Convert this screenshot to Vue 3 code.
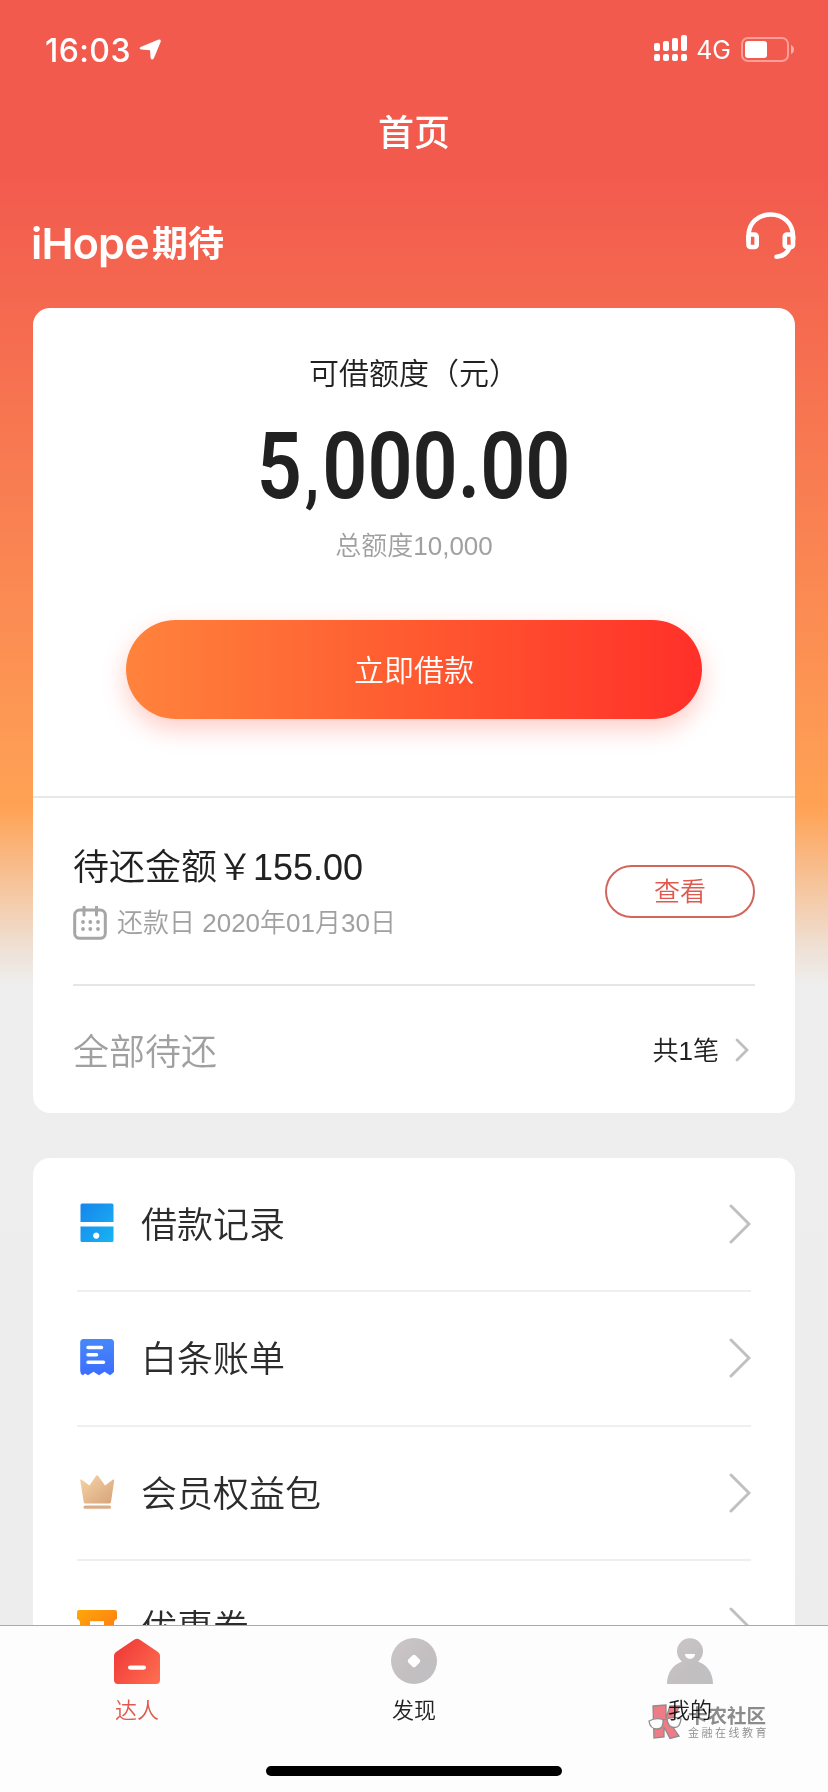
<script setup>
const menu = [
  { icon: 'record', label: '借款记录' },
  { icon: 'bill', label: '白条账单' },
  { icon: 'crown', label: '会员权益包' },
  { icon: 'coupon', label: '优惠券' },
]
</script>

<template>
  <div class="screen">
    <header class="status">
      <span class="time">16:03</span>
      <svg class="loc" width="24" height="22" viewBox="0 0 24 22"><path d="M1.6 8 L19 .8 Q22.500 -.2 21.600 3 L15 19 Q13 22 11.600 19 L11 11.300 L2.200 10.600 Q-.6 9.600 1.600 8Z" fill="#fff" /></svg>
      <svg class="signal" width="33" height="26" viewBox="0 0 33 26" fill="#fff">
        <rect x="0" y="8" width="6" height="8" rx="2" /><rect x="9" y="6" width="6" height="10" rx="2" /><rect x="18" y="3" width="6" height="13" rx="2" /><rect x="27" y="0" width="6" height="16" rx="2" />
        <rect x="0" y="19" width="6" height="7" rx="2" /><rect x="9" y="19" width="6" height="7" rx="2" /><rect x="18" y="19" width="6" height="7" rx="2" /><rect x="27" y="19" width="6" height="7" rx="2" />
      </svg>
      <span class="net">4G</span>
      <svg class="battery" width="54" height="26" viewBox="0 0 54 26">
        <rect x="1" y="1" width="46" height="23" rx="6" fill="none" stroke="#fff" stroke-opacity=".42" stroke-width="2" />
        <rect x="4" y="4" width="22" height="17" rx="3" fill="#fff" /><path d="M50 8 Q53 9.500 53 12.500 T50 17Z" fill="#fff" opacity=".5" />
      </svg>
    </header>
    <h1 class="title">首页</h1>
    <div class="brand">
      <div class="logo"><span class="logo-en">iHope</span><span class="logo-cn">期待</span></div>
      <svg class="headset" width="50" height="48" viewBox="0 0 50 48" fill="none" stroke="#fff" stroke-width="4.600" stroke-linecap="round">
        <path d="M2.500 28 V24 C2.500 11 12 2.500 24.500 2.500 S47 11 47 24 V28" />
        <rect x="2.500" y="22.500" width="8.200" height="12.500" rx="2" /><rect x="38.800" y="22.500" width="8.200" height="12.500" rx="2" />
        <path d="M43.500 36 Q39.500 44.500 30.500 44.700" />
      </svg>
    </div>

    <section class="card credit">
      <div class="limit">
        <p class="label">可借额度（元）</p>
        <p class="amount"><span class="digits">5<span class="comma">,</span>000.00</span></p>
        <p class="total">总额度10,000</p>
        <button class="borrow">立即借款</button>
      </div>
      <div class="repay">
        <div class="due">
          <div>
            <p class="sum">待还金额￥155.00</p>
            <p class="date">
              <svg width="34" height="34" viewBox="0 0 34 34" fill="none" stroke="#a6a6a6" stroke-width="3">
                <rect x="1.700" y="4" width="30.600" height="28.300" rx="5" /><path d="M11 1 V9 M23.500 1 V9" stroke-linecap="round" />
                <g fill="#a6a6a6" stroke="none"><circle cx="10" cy="16" r="1.900" /><circle cx="17.300" cy="16" r="1.900" /><circle cx="25" cy="16" r="1.900" /><circle cx="10" cy="23" r="1.900" /><circle cx="17.300" cy="23" r="1.900" /><circle cx="25" cy="23" r="1.900" /></g>
              </svg>
              <span>还款日 2020年01月30日</span>
            </p>
          </div>
          <button class="view">查看</button>
        </div>
        <div class="all">
          <span class="all-label">全部待还</span>
          <span class="count">共1笔</span>
          <svg width="14" height="24" viewBox="0 0 14 24"><path d="M2 2 L12 12 L2 22" fill="none" stroke="#bfbfbf" stroke-width="2.800" stroke-linecap="round" /></svg>
        </div>
      </div>
    </section>

    <section class="card menu">
      <div v-for="m in menu" :key="m.label" class="row">
        <svg v-if="m.icon === 'record'" class="ico" width="40" height="40" viewBox="0 0 40 40">
          <defs><linearGradient id="rec" x1="0" y1="0" x2="1" y2="1"><stop offset="0" stop-color="#1685ec" /><stop offset="1" stop-color="#18b4f2" /></linearGradient></defs>
          <path fill="url(#rec)" fill-rule="evenodd" d="M5 .5H35Q36.500 .5 36.500 2V19H3.500V2Q3.500 .5 5 .5ZM3.500 23.500H36.500V37.500Q36.500 39 35 39H5Q3.500 39 3.500 37.500ZM19.200 29.500A3.100 3.100 0 1 0 19.300 29.500Z" />
        </svg>
        <svg v-else-if="m.icon === 'bill'" class="ico" width="40" height="40" viewBox="0 0 40 40">
          <defs><linearGradient id="bil" x1="0" y1="0" x2="0" y2="1"><stop offset="0" stop-color="#4788fa" /><stop offset="1" stop-color="#3c6dff" /></linearGradient></defs>
          <path fill="url(#bil)" d="M6.500 2H33.500Q37 2 37 5.500V35Q35 37 33 38.300L27.500 34.800L22 38.300L16.500 34.800L11 38.300L8 36.500L6 38.300Q3.200 37 3.200 34V5.500Q3.200 2 6.500 2Z" />
          <path d="M11 10.500H24.500M11 17.700H19.500M11 25.300H26.500" stroke="#fff" stroke-width="3.500" stroke-linecap="round" />
        </svg>
        <svg v-else-if="m.icon === 'crown'" class="ico" width="40" height="40" viewBox="0 0 40 40">
          <defs><linearGradient id="cro" x1="0" y1="0" x2="1" y2="1"><stop offset="0" stop-color="#f6d5a6" /><stop offset="1" stop-color="#d6a27a" /></linearGradient></defs>
          <path fill="url(#cro)" d="M3.200 8.200Q3.300 7 4.500 7.600L12.500 13.500L19 4Q20.200 2.500 21.300 4L28 13.500L36 7.600Q37.300 7 37.200 8.500L34 30Q33.700 31.500 32 31.500H8.500Q7 31.500 6.700 30Z" />
          <rect x="6.500" y="33.500" width="27.500" height="3.300" rx="1.600" fill="#dbad86" />
        </svg>
        <svg v-else class="ico" width="40" height="40" viewBox="0 0 40 40">
          <defs><linearGradient id="cou" x1="0" y1="0" x2="1" y2="1"><stop offset="0" stop-color="#ffa70a" /><stop offset="1" stop-color="#fb7413" /></linearGradient></defs>
          <path fill="url(#cou)" d="M2 4H38Q40 4 40 6V13Q37 14 37 16.500V34H3V16.500Q3 14 0 13V6Q0 4 2 4Z" />
          <rect x="13" y="15.200" width="14" height="4" fill="#fff" />
        </svg>
        <span class="row-label">{{ m.label }}</span>
        <svg class="chev" width="22" height="40" viewBox="0 0 22 40"><path d="M2 2 L20 20 L2 38" fill="none" stroke="#c0c0c0" stroke-width="3" stroke-linecap="round" /></svg>
      </div>
    </section>

    <nav class="tabs">
      <div class="tab active">
        <svg width="46" height="46" viewBox="0 0 46 46">
          <defs>
            <linearGradient id="home" x1="0" y1="0.300" x2="1" y2="1"><stop offset="0" stop-color="#f03b38" /><stop offset="1" stop-color="#ff7052" /></linearGradient>
            <linearGradient id="grey" x1="0" y1="0" x2="1" y2="1"><stop offset="0" stop-color="#cbc7c8" /><stop offset=".5" stop-color="#c4bfc0" /><stop offset="1" stop-color="#bfbfc2" /></linearGradient>
          </defs>
          <path d="M20.500 1.500Q23 0 25.500 1.500L44 14Q46 15.500 46 17.500V42Q46 46 42 46H4Q0 46 0 42V17.500Q0 15.500 2 14Z" fill="url(#home)" />
          <rect x="14" y="27.500" width="18" height="4.200" rx="2.100" fill="#fff" />
        </svg>
        <span>达人</span>
      </div>
      <div class="tab">
        <svg width="46" height="46" viewBox="0 0 46 46"><circle cx="23" cy="23" r="23" fill="url(#grey)" /><rect x="18" y="18" width="10" height="10" rx="2" fill="#fff" transform="rotate(45 23 23)" /></svg>
        <span>发现</span>
      </div>
      <div class="tab">
        <svg width="46" height="46" viewBox="0 0 46 46"><path d="M15 23.500A13 13 0 1 1 31 23.500C40 26.500 46 35 46 46H0C0 35 6 26.500 15 23.500Z" fill="url(#grey)" /><path d="M18 16H28A5 5 0 0 1 18 16Z" fill="#fff" /></svg>
        <span>我的</span>
      </div>
    </nav>
    <div class="home-bar"></div>

    <div class="mark">
      <svg width="35" height="36" viewBox="0 0 35 36" stroke="#858080" stroke-width="1.300">
        <path d="M5 2L18 1V14L22 2H32L22 19L31 32L22 34.500L16 23V33L6 34Z" fill="#ee6f7a" />
        <path d="M1 17Q8 13 15 15.500Q16 25 9 25Q2 25 1 17ZM19 15Q27 12 33 15Q32 24 26 23.500Q20 23 19 15ZM15 16.500Q17 15 19 15.500" fill="#fff" />
      </svg>
      <div class="mark-text"><b>卡农社区</b><small>金融在线教育</small></div>
    </div>
  </div>
</template>

<style>
body { margin: 0; overflow: hidden; }
</style>

<style scoped>
.screen {
  position: relative; width: 828px; height: 1792px; overflow: hidden; box-sizing: border-box;
  background: linear-gradient(#f25a4e 0, #f25a4e 175px, #ffa255 808px, #efdfd2 945px, #eee 985px, #ededed 100%);
  font-family: "Liberation Sans", "Noto Sans CJK SC", sans-serif; font-weight: 350; color: #212121;
}
p, h1 { margin: 0; font-weight: 350; }
button { border: 0; padding: 0 0 4px; font-family: inherit; font-weight: 350; }
svg { display: block; flex: none; }
.status { height: 100px; display: flex; align-items: center; padding: 0 33px 0 45px; box-sizing: border-box; color: #fff; font-family: Inter, sans-serif; }
.time { font-size: 32px; font-weight: 500; width: 94px; letter-spacing: .4px; }
.loc { margin-right: auto; }
.net { font-size: 25px; font-weight: 400; margin: 0 10px 0 9px; }
.signal { margin-top: -4px; }
.title { height: 60px; line-height: 60px; padding-bottom: 6px; text-align: center; font-size: 36px; font-weight: 500; color: #fff; font-family: "Noto Sans CJK SC", sans-serif; }
.brand { height: 142px; padding: 46px 32px 0 31px; box-sizing: border-box; display: flex; justify-content: space-between; align-items: flex-start; color: #fff; }
.logo { display: flex; height: 60px; margin-top: 1px; }
.logo-en { font: 600 43px/60px Inter, sans-serif; width: 121px; letter-spacing: -.8px; white-space: nowrap; }
.logo-cn { font: 600 36px/56px "Noto Sans CJK SC", sans-serif; }
.card { margin: 0 33px; background: #fff; border-radius: 17px; box-sizing: border-box; }
.credit { height: 805px; }
.limit { height: 488px; border-bottom: 2px solid #e8e8e8; display: flex; flex-direction: column; align-items: center; }
.label { font-size: 30px; line-height: 40px; margin-top: 46px; }
.amount { font: 600 93px/100px Roboto, sans-serif; margin-top: 23px; height: 100px; }
.digits { display: block; transform: scaleX(.85); white-space: nowrap; }
.comma { display: inline-block; width: 24px; font-size: 72px; line-height: 1; text-align: center; }
.total { font-size: 26px; line-height: 40px; margin-top: 9px; color: #a0a0a0; }
.borrow { margin-top: 54px; width: 576px; height: 99px; border-radius: 50px; background: linear-gradient(90deg, #ff833c, #ff5a30 50%, #ff3029); color: #fff; font-size: 30px; box-shadow: 0 10px 24px rgba(255, 60, 40, .26); }
.repay { margin: 0 40px; }
.due { height: 186px; border-bottom: 2px solid #e6e6e6; display: flex; justify-content: space-between; }
.sum { font-size: 36px; line-height: 50px; margin-top: 45px; white-space: nowrap; }
.date { display: flex; align-items: center; gap: 10px; height: 40px; margin-top: 10px; font-size: 26px; color: #a0a0a0; }
.date span { padding-bottom: 5px; }
.view { width: 150px; height: 53px; margin-top: 67px; border: 2px solid #d3655c; border-radius: 27px; background: #fff; color: #e0594e; font-size: 26px; }
.all { display: flex; align-items: center; height: 128px; padding-right: 6px; }
.all-label { font-size: 36px; color: #a0a0a0; margin-right: auto; padding-bottom: 2px; }
.count { font-size: 26px; margin-right: 16px; padding-bottom: 3px; }
.menu { margin-top: 45px; height: 660px; padding: 0 44px; }
.row { height: 134.500px; box-sizing: border-box; border-bottom: 2px solid #efefef; display: flex; align-items: center; }
.row:first-child { height: 134px; }
.row-label { font-size: 36px; color: #2c2c2c; margin-left: 24px; margin-right: auto; padding-bottom: 4px; }
.ico { margin-top: -2px; }
.tabs { position: absolute; left: 0; right: 0; top: 1625px; height: 167px; box-sizing: border-box; border-top: 1px solid #aaa; background: #fdfdfd; display: flex; padding-top: 12px; }
.tab { flex: 1; display: flex; flex-direction: column; align-items: center; font-size: 22px; line-height: 30px; gap: 12px; }
.active { color: #e0594e; margin-right: 1px; margin-left: -1px; }
.home-bar { position: absolute; left: 266px; top: 1766px; width: 296px; height: 10px; border-radius: 5px; background: #000; }
.mark { position: absolute; left: 648px; top: 1704px; display: flex; gap: 5px; opacity: .9; color: #808080; font-family: "Noto Sans CJK SC", sans-serif; mix-blend-mode: multiply; }
.mark-text { display: flex; flex-direction: column; }
.mark b { font-size: 19.500px; line-height: 22px; white-space: nowrap; }
.mark small { font-size: 11px; line-height: 12px; letter-spacing: 2.500px; white-space: nowrap; }
</style>
